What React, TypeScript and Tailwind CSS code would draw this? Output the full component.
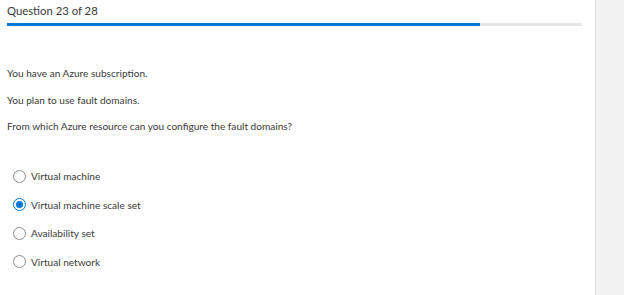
const options = [
  { label: "Virtual machine", checked: false },
  { label: "Virtual machine scale set", checked: true },
  { label: "Availability set", checked: false },
  { label: "Virtual network", checked: false },
];

function Radio({ checked }: { checked: boolean }) {
  if (checked) {
    return (
      <span className="flex h-[13px] w-[13px] shrink-0 items-center justify-center rounded-full border border-[#0078d4]">
        <span className="h-[7px] w-[7px] rounded-full bg-[#0078d4]" />
      </span>
    );
  }
  return <span className="h-[13px] w-[13px] shrink-0 rounded-full border border-[#8a8a8a]" />;
}

export default function App() {
  return (
    <div className="flex h-[295px] w-[624px] bg-white font-['Lato',sans-serif] text-[#3a3a3a]">
      <main className="w-[595px] shrink-0 pl-[7px] pr-[13px]">
        <p className="pt-[3px] text-[11.3px] leading-[16px]">Question 23 of 28</p>
        <div className="mt-[4px] h-[3px] w-full bg-[#e6e6e6]">
          <div className="h-full w-[82.2%] bg-[#0078d4]" />
        </div>

        <div className="mt-[39px] flex flex-col gap-[10.5px] text-[10.1px] leading-[16px]">
          <p>You have an Azure subscription.</p>
          <p>You plan to use fault domains.</p>
          <p>From which Azure resource can you configure the fault domains?</p>
        </div>

        <ul className="mt-[34px] flex flex-col gap-[12.67px] pl-[6px] text-[10.1px] leading-[16px]">
          {options.map((o) => (
            <li key={o.label} className="flex items-center gap-[5px]">
              <Radio checked={o.checked} />
              <span>{o.label}</span>
            </li>
          ))}
        </ul>
      </main>
      <aside className="flex-1 border-l border-[#e1e1e1] bg-[#f2f2f2]" />
    </div>
  );
}
